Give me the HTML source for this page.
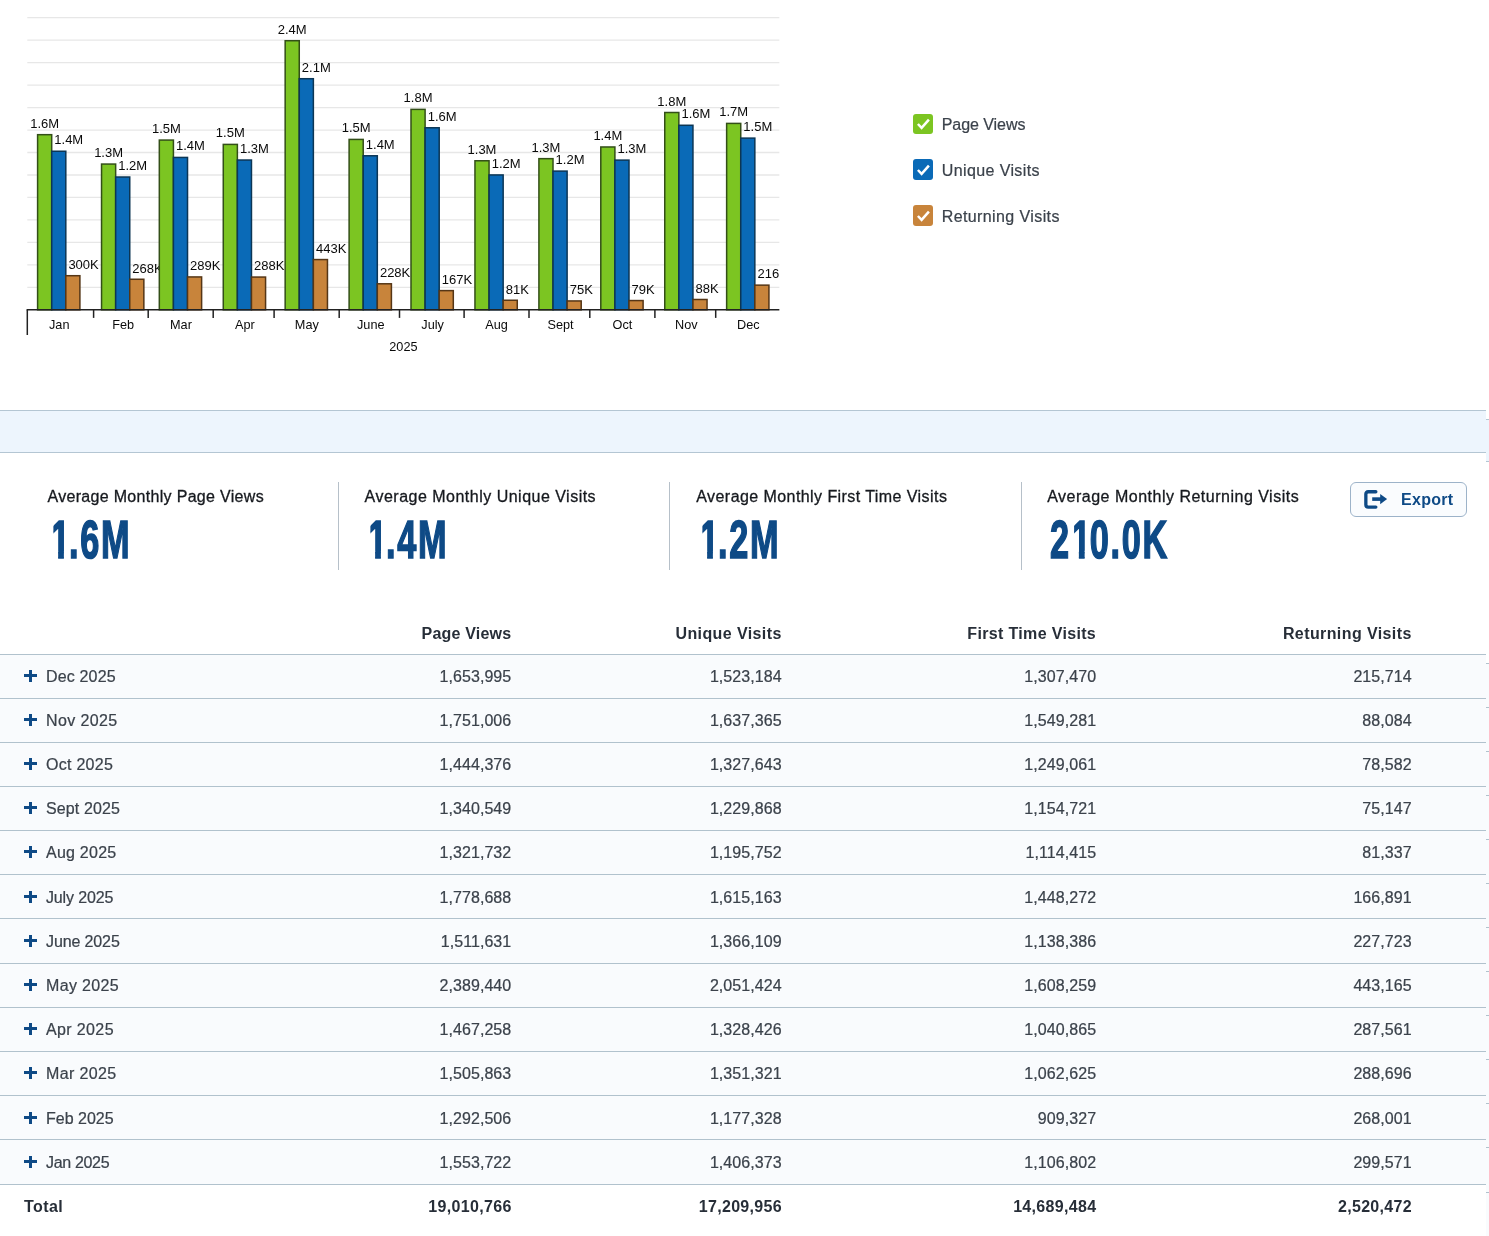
<!DOCTYPE html>
<html lang="en"><head><meta charset="utf-8"><title>Site Statistics</title>
<style>
html,body{margin:0;padding:0;background:#fff;}
body{width:1489px;height:1236px;position:relative;overflow:hidden;font-family:"Liberation Sans",Arial,sans-serif;font-size:16px;color:#3b424b;}
#wrap{position:absolute;left:0;top:0;width:1489px;height:1236px;overflow:hidden;will-change:transform;}
#chart{position:absolute;left:0;top:0;}
.lg{position:absolute;left:913px;height:20px;line-height:20px;white-space:nowrap;}
.lg svg{position:absolute;left:0;top:0;}
.lg span{position:absolute;left:28.7px;top:1px;color:#3b424b;-webkit-text-stroke:0.22px #3b424b;}
#band{position:absolute;left:0;top:410px;width:1486px;height:41px;background:#edf5fd;border-top:1px solid #b4c6d3;border-bottom:1px solid #b4c6d3;}
.st{position:absolute;top:485px;white-space:nowrap;}
.sl{color:#16191e;-webkit-text-stroke:0.3px #16191e;line-height:24px;height:24px;}
.sv{position:absolute;left:2.4px;top:24.2px;letter-spacing:2.6px;font-weight:bold;font-size:53.6px;line-height:60px;color:#0e4a86;transform-origin:0 0;transform:scaleX(0.64);-webkit-text-stroke:1.6px #0e4a86;}
.one{display:inline-block;margin-left:1px;margin-right:-3.6px;clip-path:polygon(4.3px -2px,40px -2px,40px 41.6px,20.7px 41.6px,20.7px 62px,11.7px 62px,11.7px 41.6px,4.3px 41.6px);}
.vd{position:absolute;top:482px;height:88px;width:1px;background:#b6c0c9;}
#exp{position:absolute;left:1350px;top:482px;width:115px;height:33px;border:1px solid #9db3c9;border-radius:6px;background:#fafcfe;}
#exp svg{position:absolute;left:13px;top:7px;}
#exp span{position:absolute;left:50px;top:0;line-height:33px;font-weight:bold;color:#0e4a86;letter-spacing:0.3px;}
.th{position:absolute;top:622px;line-height:24px;font-weight:bold;color:#272e38;text-align:right;white-space:nowrap;}
.tr{position:absolute;left:0;width:1486px;background:#f9fbfd;border-top:1px solid #b1c2cd;box-sizing:border-box;}
.tr span{-webkit-text-stroke:0.22px #3b424b;position:absolute;top:10px;line-height:22px;white-space:nowrap;}
.tr .pl{left:24.1px;width:13px;height:12px;}
.tr .pl:before{content:"";position:absolute;left:0;top:3.9px;width:12.9px;height:3.3px;background:#0e4a86;}
.tr .pl:after{content:"";position:absolute;left:5px;top:0;width:3.2px;height:11.8px;background:#0e4a86;}
.tr .mn{left:46px;}
.c{text-align:right;letter-spacing:0.07px;}
.c1,.h1{right:977.7px;} .c2,.h2{right:707.3px;} .c3,.h3{right:392.9px;} .c4,.h4{right:77.3px;}
.tr .c1{right:974.7px;} .tr .c2{right:704.3px;} .tr .c3{right:389.9px;} .tr .c4{right:74.3px;}
#strip{position:absolute;left:1486px;top:0;width:3px;height:1236px;overflow:hidden;}
#strip div{position:absolute;left:0;width:3px;}
#tot{position:absolute;left:0;top:1184px;width:1486px;height:52px;border-top:1px solid #b1c2cd;font-weight:bold;color:#272e38;box-sizing:border-box;}
#tot span{position:absolute;top:11px;line-height:22px;white-space:nowrap;}
#tot .c{letter-spacing:0.32px;margin-right:-0.3px;}
</style></head><body><div id="wrap">
<svg id="chart" width="800" height="372" viewBox="0 0 800 372">
<defs><clipPath id="cp"><rect x="0" y="0" width="779.6" height="372"/></clipPath></defs>
<g clip-path="url(#cp)" font-family="Liberation Sans, Arial, sans-serif" font-size="12.7" fill="#0a0a0a">
<line x1="27.3" x2="779.6" y1="287.33" y2="287.33" stroke="#e7e7e7" stroke-width="1.3"/>
<line x1="27.3" x2="779.6" y1="264.86" y2="264.86" stroke="#e7e7e7" stroke-width="1.3"/>
<line x1="27.3" x2="779.6" y1="242.39" y2="242.39" stroke="#e7e7e7" stroke-width="1.3"/>
<line x1="27.3" x2="779.6" y1="219.92" y2="219.92" stroke="#e7e7e7" stroke-width="1.3"/>
<line x1="27.3" x2="779.6" y1="197.45" y2="197.45" stroke="#e7e7e7" stroke-width="1.3"/>
<line x1="27.3" x2="779.6" y1="174.98" y2="174.98" stroke="#e7e7e7" stroke-width="1.3"/>
<line x1="27.3" x2="779.6" y1="152.51" y2="152.51" stroke="#e7e7e7" stroke-width="1.3"/>
<line x1="27.3" x2="779.6" y1="130.04" y2="130.04" stroke="#e7e7e7" stroke-width="1.3"/>
<line x1="27.3" x2="779.6" y1="107.57" y2="107.57" stroke="#e7e7e7" stroke-width="1.3"/>
<line x1="27.3" x2="779.6" y1="85.10" y2="85.10" stroke="#e7e7e7" stroke-width="1.3"/>
<line x1="27.3" x2="779.6" y1="62.63" y2="62.63" stroke="#e7e7e7" stroke-width="1.3"/>
<line x1="27.3" x2="779.6" y1="40.16" y2="40.16" stroke="#e7e7e7" stroke-width="1.3"/>
<line x1="27.3" x2="779.6" y1="17.69" y2="17.69" stroke="#e7e7e7" stroke-width="1.3"/>
<rect x="37.60" y="134.68" width="14.10" height="175.12" fill="#7cc522" stroke="#334f18" stroke-width="1.5"/>
<rect x="51.70" y="151.25" width="14.10" height="158.55" fill="#0a6ab7" stroke="#0c3655" stroke-width="1.5"/>
<rect x="65.80" y="275.71" width="14.10" height="34.09" fill="#c8843b" stroke="#553616" stroke-width="1.5"/>
<text font-size="13" x="44.65" y="127.73" text-anchor="middle">1.6M</text>
<text font-size="13" x="54.30" y="144.15">1.4M</text>
<text font-size="13" x="68.40" y="269.01">300K</text>
<rect x="101.55" y="164.06" width="14.10" height="145.74" fill="#7cc522" stroke="#334f18" stroke-width="1.5"/>
<rect x="115.65" y="177.01" width="14.10" height="132.79" fill="#0a6ab7" stroke="#0c3655" stroke-width="1.5"/>
<rect x="129.75" y="279.26" width="14.10" height="30.54" fill="#c8843b" stroke="#553616" stroke-width="1.5"/>
<text font-size="13" x="108.60" y="157.11" text-anchor="middle">1.3M</text>
<text font-size="13" x="118.25" y="169.91">1.2M</text>
<text font-size="13" x="132.35" y="272.56">268K</text>
<rect x="159.32" y="140.07" width="14.10" height="169.73" fill="#7cc522" stroke="#334f18" stroke-width="1.5"/>
<rect x="173.42" y="157.44" width="14.10" height="152.36" fill="#0a6ab7" stroke="#0c3655" stroke-width="1.5"/>
<rect x="187.52" y="276.94" width="14.10" height="32.86" fill="#c8843b" stroke="#553616" stroke-width="1.5"/>
<text font-size="13" x="166.37" y="133.12" text-anchor="middle">1.5M</text>
<text font-size="13" x="176.02" y="150.34">1.4M</text>
<text font-size="13" x="190.12" y="270.24">289K</text>
<rect x="223.27" y="144.41" width="14.10" height="165.39" fill="#7cc522" stroke="#334f18" stroke-width="1.5"/>
<rect x="237.37" y="160.02" width="14.10" height="149.78" fill="#0a6ab7" stroke="#0c3655" stroke-width="1.5"/>
<rect x="251.47" y="277.06" width="14.10" height="32.74" fill="#c8843b" stroke="#553616" stroke-width="1.5"/>
<text font-size="13" x="230.32" y="137.46" text-anchor="middle">1.5M</text>
<text font-size="13" x="239.97" y="152.92">1.3M</text>
<text font-size="13" x="254.07" y="270.36">288K</text>
<rect x="285.16" y="40.71" width="14.10" height="269.09" fill="#7cc522" stroke="#334f18" stroke-width="1.5"/>
<rect x="299.26" y="78.72" width="14.10" height="231.08" fill="#0a6ab7" stroke="#0c3655" stroke-width="1.5"/>
<rect x="313.36" y="259.57" width="14.10" height="50.23" fill="#c8843b" stroke="#553616" stroke-width="1.5"/>
<text font-size="13" x="292.21" y="33.76" text-anchor="middle">2.4M</text>
<text font-size="13" x="301.86" y="71.62">2.1M</text>
<text font-size="13" x="315.96" y="252.87">443K</text>
<rect x="349.11" y="139.42" width="14.10" height="170.38" fill="#7cc522" stroke="#334f18" stroke-width="1.5"/>
<rect x="363.21" y="155.78" width="14.10" height="154.02" fill="#0a6ab7" stroke="#0c3655" stroke-width="1.5"/>
<rect x="377.31" y="283.79" width="14.10" height="26.01" fill="#c8843b" stroke="#553616" stroke-width="1.5"/>
<text font-size="13" x="356.16" y="132.47" text-anchor="middle">1.5M</text>
<text font-size="13" x="365.81" y="148.68">1.4M</text>
<text font-size="13" x="379.91" y="277.09">228K</text>
<rect x="411.00" y="109.39" width="14.10" height="200.41" fill="#7cc522" stroke="#334f18" stroke-width="1.5"/>
<rect x="425.10" y="127.77" width="14.10" height="182.03" fill="#0a6ab7" stroke="#0c3655" stroke-width="1.5"/>
<rect x="439.20" y="290.63" width="14.10" height="19.17" fill="#c8843b" stroke="#553616" stroke-width="1.5"/>
<text font-size="13" x="418.05" y="102.44" text-anchor="middle">1.8M</text>
<text font-size="13" x="427.70" y="120.67">1.6M</text>
<text font-size="13" x="441.80" y="283.93">167K</text>
<rect x="474.96" y="160.77" width="14.10" height="149.03" fill="#7cc522" stroke="#334f18" stroke-width="1.5"/>
<rect x="489.06" y="174.94" width="14.10" height="134.86" fill="#0a6ab7" stroke="#0c3655" stroke-width="1.5"/>
<rect x="503.16" y="300.25" width="14.10" height="9.55" fill="#c8843b" stroke="#553616" stroke-width="1.5"/>
<text font-size="13" x="482.01" y="153.82" text-anchor="middle">1.3M</text>
<text font-size="13" x="491.66" y="167.84">1.2M</text>
<text font-size="13" x="505.76" y="293.55">81K</text>
<rect x="538.91" y="158.66" width="14.10" height="151.14" fill="#7cc522" stroke="#334f18" stroke-width="1.5"/>
<rect x="553.01" y="171.10" width="14.10" height="138.70" fill="#0a6ab7" stroke="#0c3655" stroke-width="1.5"/>
<rect x="567.11" y="300.95" width="14.10" height="8.85" fill="#c8843b" stroke="#553616" stroke-width="1.5"/>
<text font-size="13" x="545.96" y="151.71" text-anchor="middle">1.3M</text>
<text font-size="13" x="555.61" y="164.00">1.2M</text>
<text font-size="13" x="569.71" y="294.25">75K</text>
<rect x="600.80" y="146.98" width="14.10" height="162.82" fill="#7cc522" stroke="#334f18" stroke-width="1.5"/>
<rect x="614.90" y="160.11" width="14.10" height="149.69" fill="#0a6ab7" stroke="#0c3655" stroke-width="1.5"/>
<rect x="629.00" y="300.56" width="14.10" height="9.24" fill="#c8843b" stroke="#553616" stroke-width="1.5"/>
<text font-size="13" x="607.85" y="140.03" text-anchor="middle">1.4M</text>
<text font-size="13" x="617.50" y="153.01">1.3M</text>
<text font-size="13" x="631.60" y="293.86">79K</text>
<rect x="664.75" y="112.50" width="14.10" height="197.30" fill="#7cc522" stroke="#334f18" stroke-width="1.5"/>
<rect x="678.85" y="125.28" width="14.10" height="184.52" fill="#0a6ab7" stroke="#0c3655" stroke-width="1.5"/>
<rect x="692.95" y="299.49" width="14.10" height="10.31" fill="#c8843b" stroke="#553616" stroke-width="1.5"/>
<text font-size="13" x="671.80" y="105.55" text-anchor="middle">1.8M</text>
<text font-size="13" x="681.45" y="118.18">1.6M</text>
<text font-size="13" x="695.55" y="292.79">88K</text>
<rect x="726.64" y="123.41" width="14.10" height="186.39" fill="#7cc522" stroke="#334f18" stroke-width="1.5"/>
<rect x="740.74" y="138.12" width="14.10" height="171.68" fill="#0a6ab7" stroke="#0c3655" stroke-width="1.5"/>
<rect x="754.84" y="285.14" width="14.10" height="24.66" fill="#c8843b" stroke="#553616" stroke-width="1.5"/>
<text font-size="13" x="733.69" y="116.46" text-anchor="middle">1.7M</text>
<text font-size="13" x="743.34" y="131.02">1.5M</text>
<text font-size="13" x="757.44" y="278.44">216K</text>
<line x1="26.6" x2="779.6" y1="309.80" y2="309.80" stroke="#222" stroke-width="1.5"/>
<line x1="27.3" x2="27.3" y1="309.80" y2="335" stroke="#222" stroke-width="1.5"/>
<line x1="93.6" x2="93.6" y1="309.80" y2="317.9" stroke="#222" stroke-width="1.5"/>
<line x1="148.2" x2="148.2" y1="309.80" y2="317.9" stroke="#222" stroke-width="1.5"/>
<line x1="213.2" x2="213.2" y1="309.80" y2="317.9" stroke="#222" stroke-width="1.5"/>
<line x1="274.1" x2="274.1" y1="309.80" y2="317.9" stroke="#222" stroke-width="1.5"/>
<line x1="339.2" x2="339.2" y1="309.80" y2="317.9" stroke="#222" stroke-width="1.5"/>
<line x1="399.5" x2="399.5" y1="309.80" y2="317.9" stroke="#222" stroke-width="1.5"/>
<line x1="464.1" x2="464.1" y1="309.80" y2="317.9" stroke="#222" stroke-width="1.5"/>
<line x1="529.0" x2="529.0" y1="309.80" y2="317.9" stroke="#222" stroke-width="1.5"/>
<line x1="589.8" x2="589.8" y1="309.80" y2="317.9" stroke="#222" stroke-width="1.5"/>
<line x1="654.9" x2="654.9" y1="309.80" y2="317.9" stroke="#222" stroke-width="1.5"/>
<line x1="715.7" x2="715.7" y1="309.80" y2="317.9" stroke="#222" stroke-width="1.5"/>
<text x="59.25" y="329.4" text-anchor="middle">Jan</text>
<text x="123.20" y="329.4" text-anchor="middle">Feb</text>
<text x="180.97" y="329.4" text-anchor="middle">Mar</text>
<text x="244.92" y="329.4" text-anchor="middle">Apr</text>
<text x="306.81" y="329.4" text-anchor="middle">May</text>
<text x="370.76" y="329.4" text-anchor="middle">June</text>
<text x="432.65" y="329.4" text-anchor="middle">July</text>
<text x="496.61" y="329.4" text-anchor="middle">Aug</text>
<text x="560.56" y="329.4" text-anchor="middle">Sept</text>
<text x="622.45" y="329.4" text-anchor="middle">Oct</text>
<text x="686.40" y="329.4" text-anchor="middle">Nov</text>
<text x="748.29" y="329.4" text-anchor="middle">Dec</text>
<text x="403.4" y="351.3" text-anchor="middle">2025</text>
</g></svg>
<div class="lg" style="top:114px"><svg width="20" height="20" viewBox="0 0 20 20"><rect width="20" height="20" rx="3" fill="#7cc522"/><path d="M4.9 10.0 L8.6 13.9 L15.9 5.6" fill="none" stroke="#fff" stroke-width="2.5"/></svg><span style="top:1px;letter-spacing:-0.05px">Page Views</span></div>
<div class="lg" style="top:159px"><svg width="20" height="21" viewBox="0 0 20 21"><rect width="20" height="21" rx="3" fill="#0a6ab7"/><path d="M4.9 11.0 L8.6 14.9 L15.9 6.6" fill="none" stroke="#fff" stroke-width="2.5"/></svg><span style="top:2px;letter-spacing:0.40px">Unique Visits</span></div>
<div class="lg" style="top:205px"><svg width="20" height="21" viewBox="0 0 20 21"><rect width="20" height="21" rx="3" fill="#c8843b"/><path d="M4.9 11.0 L8.6 14.9 L15.9 6.6" fill="none" stroke="#fff" stroke-width="2.5"/></svg><span style="top:2px;letter-spacing:0.40px">Returning Visits</span></div>

<div id="band"></div>
<div class="st" style="left:47.5px"><div class="sl" style="letter-spacing:0.31px">Average Monthly Page Views</div><div class="sv"><span class="one">1</span>.6M</div></div>
<div class="st" style="left:364.6px"><div class="sl" style="letter-spacing:0.49px">Average Monthly Unique Visits</div><div class="sv"><span class="one">1</span>.4M</div></div>
<div class="st" style="left:696.3px"><div class="sl" style="letter-spacing:0.43px">Average Monthly First Time Visits</div><div class="sv"><span class="one">1</span>.2M</div></div>
<div class="st" style="left:1047.2px"><div class="sl" style="letter-spacing:0.50px">Average Monthly Returning Visits</div><div class="sv">2<span class="one">1</span>0.0K</div></div>
<div class="vd" style="left:338px"></div>
<div class="vd" style="left:669px"></div>
<div class="vd" style="left:1021px"></div>

<div id="exp"><svg width="24" height="20" viewBox="0 0 24 20"><path d="M11.85 1.75 H4.2 Q1.85 1.75 1.85 4.1 V14.7 Q1.85 17.05 4.2 17.05 H11.85" fill="none" stroke="#0e4a86" stroke-width="3.3" stroke-linecap="round" stroke-linejoin="round"/><path d="M8.2 9.1 H17" stroke="#0e4a86" stroke-width="3.6" fill="none"/><path d="M16.2 4 L23.1 9.1 L16.2 14.2 Z" fill="#0e4a86"/></svg><span>Export</span></div>
<div class="th h1" style="letter-spacing:0.2px">Page Views</div>
<div class="th h2" style="letter-spacing:0.4px">Unique Visits</div>
<div class="th h3" style="letter-spacing:0.34px">First Time Visits</div>
<div class="th h4" style="letter-spacing:0.4px">Returning Visits</div>
<div class="tr" style="top:654px;height:44px"><span class="pl" style="top:15.1px"></span><span class="mn" style="top:11px;letter-spacing:0.16px">Dec 2025</span><span class="c c1" style="top:11px">1,653,995</span><span class="c c2" style="top:11px">1,523,184</span><span class="c c3" style="top:11px">1,307,470</span><span class="c c4" style="top:11px">215,714</span></div>
<div class="tr" style="top:698px;height:44px"><span class="pl" style="top:15.1px"></span><span class="mn" style="top:11px;letter-spacing:0.37px">Nov 2025</span><span class="c c1" style="top:11px">1,751,006</span><span class="c c2" style="top:11px">1,637,365</span><span class="c c3" style="top:11px">1,549,281</span><span class="c c4" style="top:11px">88,084</span></div>
<div class="tr" style="top:742px;height:44px"><span class="pl" style="top:15.1px"></span><span class="mn" style="top:11px;letter-spacing:0.27px">Oct 2025</span><span class="c c1" style="top:11px">1,444,376</span><span class="c c2" style="top:11px">1,327,643</span><span class="c c3" style="top:11px">1,249,061</span><span class="c c4" style="top:11px">78,582</span></div>
<div class="tr" style="top:786px;height:44px"><span class="pl" style="top:15.1px"></span><span class="mn" style="top:11px;letter-spacing:0.12px">Sept 2025</span><span class="c c1" style="top:11px">1,340,549</span><span class="c c2" style="top:11px">1,229,868</span><span class="c c3" style="top:11px">1,154,721</span><span class="c c4" style="top:11px">75,147</span></div>
<div class="tr" style="top:830px;height:44px"><span class="pl" style="top:15.1px"></span><span class="mn" style="top:11px;letter-spacing:0.24px">Aug 2025</span><span class="c c1" style="top:11px">1,321,732</span><span class="c c2" style="top:11px">1,195,752</span><span class="c c3" style="top:11px">1,114,415</span><span class="c c4" style="top:11px">81,337</span></div>
<div class="tr" style="top:874px;height:44px"><span class="pl" style="top:16.1px"></span><span class="mn" style="top:12px;letter-spacing:-0.14px">July 2025</span><span class="c c1" style="top:12px">1,778,688</span><span class="c c2" style="top:12px">1,615,163</span><span class="c c3" style="top:12px">1,448,272</span><span class="c c4" style="top:12px">166,891</span></div>
<div class="tr" style="top:918px;height:45px"><span class="pl" style="top:16.1px"></span><span class="mn" style="top:12px;letter-spacing:-0.12px">June 2025</span><span class="c c1" style="top:12px">1,511,631</span><span class="c c2" style="top:12px">1,366,109</span><span class="c c3" style="top:12px">1,138,386</span><span class="c c4" style="top:12px">227,723</span></div>
<div class="tr" style="top:963px;height:44px"><span class="pl" style="top:15.1px"></span><span class="mn" style="top:11px;letter-spacing:0.33px">May 2025</span><span class="c c1" style="top:11px">2,389,440</span><span class="c c2" style="top:11px">2,051,424</span><span class="c c3" style="top:11px">1,608,259</span><span class="c c4" style="top:11px">443,165</span></div>
<div class="tr" style="top:1007px;height:44px"><span class="pl" style="top:15.1px"></span><span class="mn" style="top:11px;letter-spacing:0.37px">Apr 2025</span><span class="c c1" style="top:11px">1,467,258</span><span class="c c2" style="top:11px">1,328,426</span><span class="c c3" style="top:11px">1,040,865</span><span class="c c4" style="top:11px">287,561</span></div>
<div class="tr" style="top:1051px;height:44px"><span class="pl" style="top:15.1px"></span><span class="mn" style="top:11px;letter-spacing:0.37px">Mar 2025</span><span class="c c1" style="top:11px">1,505,863</span><span class="c c2" style="top:11px">1,351,321</span><span class="c c3" style="top:11px">1,062,625</span><span class="c c4" style="top:11px">288,696</span></div>
<div class="tr" style="top:1095px;height:44px"><span class="pl" style="top:16.1px"></span><span class="mn" style="top:12px;letter-spacing:0.00px">Feb 2025</span><span class="c c1" style="top:12px">1,292,506</span><span class="c c2" style="top:12px">1,177,328</span><span class="c c3" style="top:12px">909,327</span><span class="c c4" style="top:12px">268,001</span></div>
<div class="tr" style="top:1139px;height:45px"><span class="pl" style="top:16.1px"></span><span class="mn" style="top:12px;letter-spacing:-0.33px">Jan 2025</span><span class="c c1" style="top:12px">1,553,722</span><span class="c c2" style="top:12px">1,406,373</span><span class="c c3" style="top:12px">1,106,802</span><span class="c c4" style="top:12px">299,571</span></div>

<div id="tot"><span style="left:24px;letter-spacing:0.4px">Total</span><span class="c" style="right:974.7px">19,010,766</span><span class="c" style="right:704.3px">17,209,956</span><span class="c" style="right:389.9px">14,689,484</span><span class="c" style="right:74.3px">2,520,472</span></div>
<div id="strip"><div style="top:419px;height:41px;background:#edf5fd;border-top:1px solid #b4c6d3;border-bottom:1px solid #b4c6d3"></div><div style="top:663px;height:580px;background:#f9fbfd"></div><div style="top:663px;height:1px;background:#b1c2cd"></div><div style="top:707px;height:1px;background:#b1c2cd"></div><div style="top:751px;height:1px;background:#b1c2cd"></div><div style="top:795px;height:1px;background:#b1c2cd"></div><div style="top:839px;height:1px;background:#b1c2cd"></div><div style="top:883px;height:1px;background:#b1c2cd"></div><div style="top:927px;height:1px;background:#b1c2cd"></div><div style="top:971px;height:1px;background:#b1c2cd"></div><div style="top:1015px;height:1px;background:#b1c2cd"></div><div style="top:1059px;height:1px;background:#b1c2cd"></div><div style="top:1103px;height:1px;background:#b1c2cd"></div><div style="top:1147px;height:1px;background:#b1c2cd"></div><div style="top:1192px;height:1px;background:#b1c2cd"></div></div>
</div></body></html>
